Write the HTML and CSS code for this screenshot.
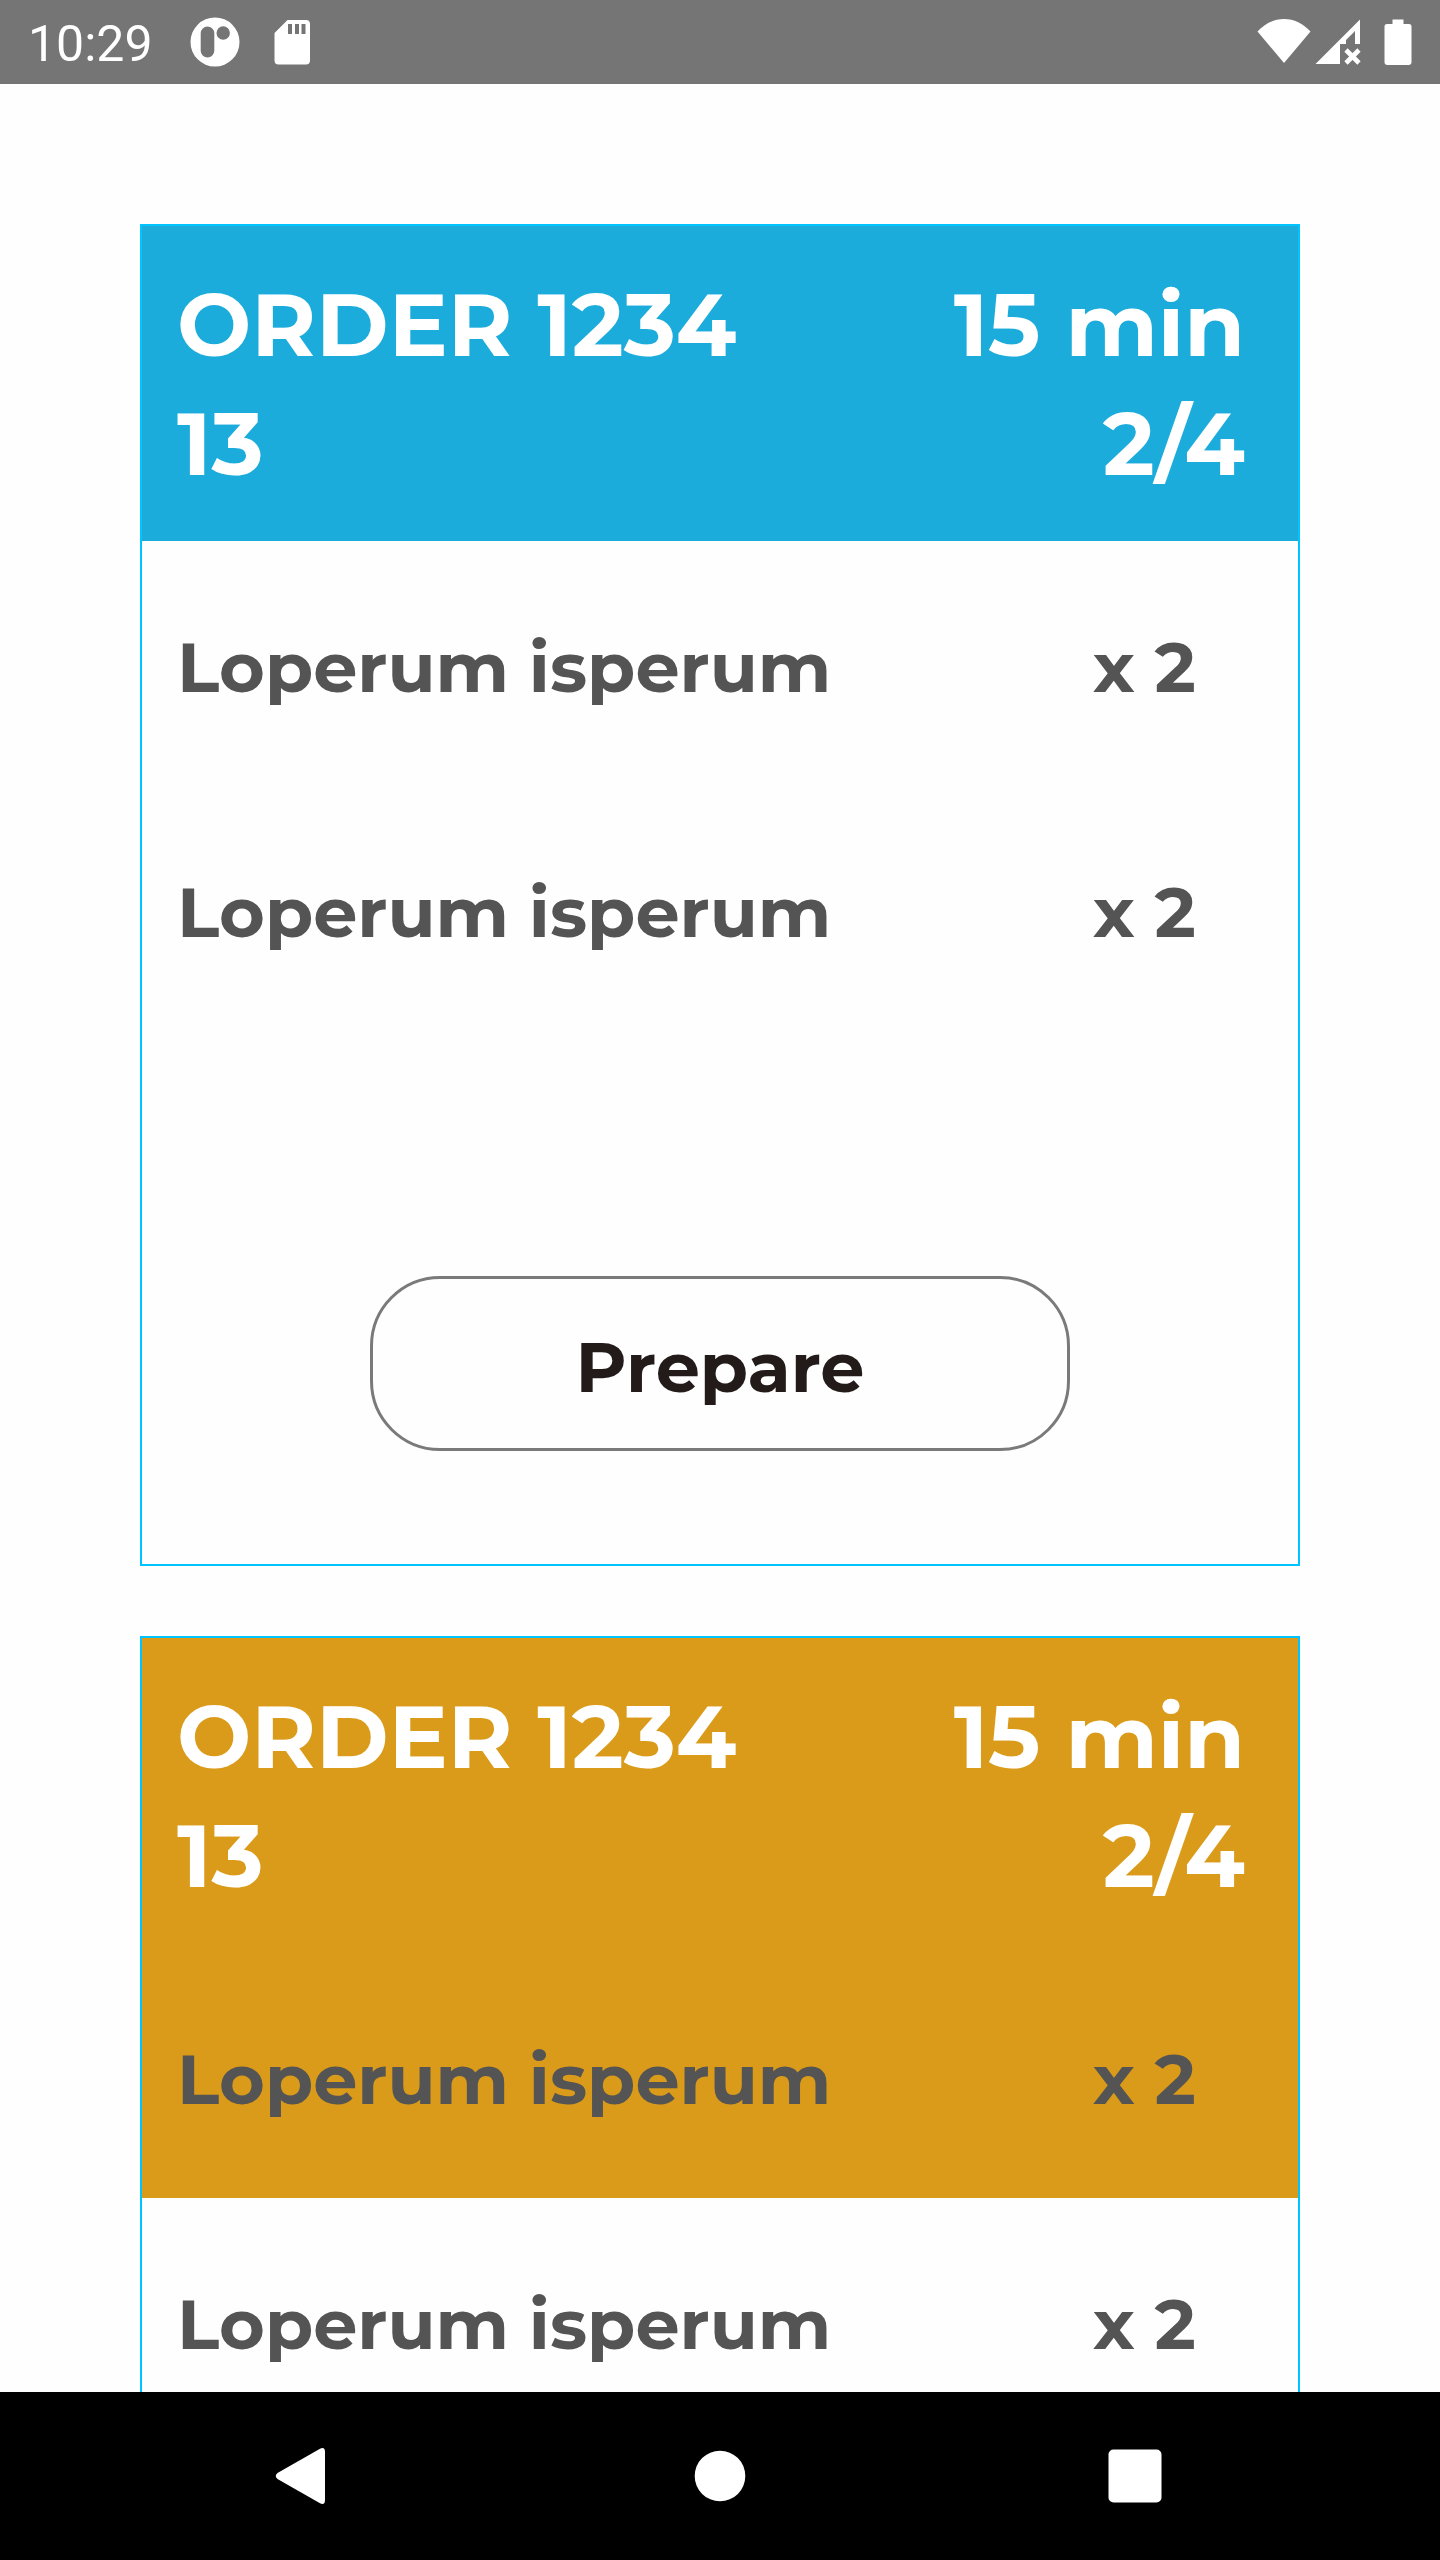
FILE: index.html
```html
<!DOCTYPE html>
<html lang="en">
<head>
  <meta charset="utf-8">
  <meta name="viewport" content="width=device-width, initial-scale=1">
  <title>Orders</title>
  <link rel="stylesheet" href="styles.css">
</head>
<body>
  <div class="screen">
    <header class="status-bar">
      <time class="clock">10:29</time>
      <svg class="status-icon app-icon" viewBox="0 0 50 50" aria-hidden="true">
        <path fill="#fff" fill-rule="evenodd" d="M25 .5a24.500 24.500 0 1 0 0 49a24.500 24.500 0 1 0 0-49zM17.500 9.500a6.800 6.800 0 0 1 6.800 6.800v17.400a6.800 6.800 0 0 1-13.600 0V16.300a6.800 6.800 0 0 1 6.800-6.800zM33.200 9.300a6.700 6.700 0 1 1 0 13.400a6.700 6.700 0 1 1 0-13.400z"/>
      </svg>
      <svg class="status-icon card-icon" viewBox="0 0 36 50" aria-hidden="true">
        <path fill="#fff" fill-rule="evenodd" d="M13.500 3H32a4 4 0 0 1 4 4v36.500a4 4 0 0 1-4 4H4.500a4 4 0 0 1-4-4V16zM14 7v10h4V7zM21 7v10h4V7zM27.500 7v10h4V7z"/>
      </svg>
      <span class="spacer"></span>
      <svg class="status-icon wifi-icon" viewBox="0 0 54 50" aria-hidden="true">
        <path fill="#fff" d="M27 46L.5 14.500C8 6.500 17 2 27 2s19 4.500 26.500 12.500z"/>
      </svg>
      <svg class="status-icon signal-icon" viewBox="0 0 46 50" aria-hidden="true">
        <path fill="#fff" d="M45 2.500V27h-5V14l-9 9v4h-6v20H.5z"/>
        <path fill="none" stroke="#fff" stroke-width="4.600" d="M31 33l13 13M44 33L31 46"/>
      </svg>
      <svg class="status-icon battery-icon" viewBox="0 0 28 50" aria-hidden="true">
        <path fill="#fff" d="M8.500 2.500h11V7H25a2.500 2.500 0 0 1 2.500 2.500v35.500a3 3 0 0 1-3 3h-21a3 3 0 0 1-3-3V9.500A2.500 2.500 0 0 1 3 7h5.500z"/>
      </svg>
    </header>

    <main class="orders">
      <article class="order order-new">
        <header class="order-header">
          <h2 class="order-title">ORDER 1234<br>13</h2>
          <p class="order-meta">15 min<br>2/4</p>
        </header>
        <ul class="items">
          <li class="item"><span>Loperum isperum</span><span>x 2</span></li>
          <li class="item"><span>Loperum isperum</span><span>x 2</span></li>
        </ul>
        <footer class="order-footer">
          <button class="prepare" type="button">Prepare</button>
        </footer>
      </article>

      <article class="order order-started">
        <header class="order-header">
          <h2 class="order-title">ORDER 1234<br>13</h2>
          <p class="order-meta">15 min<br>2/4</p>
        </header>
        <ul class="items">
          <li class="item item-active"><span>Loperum isperum</span><span>x 2</span></li>
          <li class="item"><span>Loperum isperum</span><span>x 2</span></li>
        </ul>
      </article>
    </main>

    <nav class="nav-bar" aria-label="System">
      <button class="nav-button" type="button" aria-label="Back">
        <svg class="nav-icon" viewBox="0 0 60 60" aria-hidden="true"><path fill="#fff" d="M2.500 27L45 2.700Q50 .500 50 6V54Q50 59.500 45 57.300L2.500 33Q-1 30 2.500 27z"/></svg>
      </button>
      <button class="nav-button" type="button" aria-label="Home">
        <svg class="nav-icon" viewBox="0 0 60 60" aria-hidden="true"><circle fill="#fff" cx="30" cy="30" r="25.300"/></svg>
      </button>
      <button class="nav-button" type="button" aria-label="Recent apps">
        <svg class="nav-icon" viewBox="0 0 60 60" aria-hidden="true"><rect fill="#fff" x="3.500" y="3.500" width="53" height="53" rx="5"/></svg>
      </button>
    </nav>
  </div>
</body>
</html>
```

FILE: styles.css
```css
* {
  box-sizing: border-box;
}

body {
  margin: 0;
  background: #fefefe;
  font-family: "Montserrat", "Inter", sans-serif;
}

.screen {
  display: flex;
  flex-direction: column;
  height: 100vh;
}

/* Status bar */
.status-bar {
  display: flex;
  align-items: center;
  flex: none;
  height: 84px;
  padding: 0 28px;
  background: #757575;
  color: #fff;
}

.clock {
  width: 162px;
  padding-top: 4px;
  font: 400 50px/80px Roboto, sans-serif;
}

.status-icon {
  height: 50px;
  flex: none;
}

.app-icon {
  width: 50px;
}

.card-icon {
  width: 36px;
  margin-left: 34px;
}

.spacer {
  flex: 1;
}

.wifi-icon {
  width: 54px;
}

.signal-icon {
  width: 46px;
  margin-left: 4px;
}

.battery-icon {
  width: 28px;
  margin-left: 23px;
}

/* Order list */
.orders {
  flex: 1;
  min-height: 0;
  overflow-y: auto;
  scrollbar-width: none;
  padding: 140px;
}

.order {
  border: 2px solid #00c4ff;
  font-weight: 700;
}

.order + .order {
  margin-top: 70px;
}

.order-header {
  display: flex;
  justify-content: space-between;
  padding: 39px 53px 38px 35px;
  color: #fff;
}

.order-new .order-header {
  background: #1cacdc;
}

.order-started .order-header,
.item-active {
  background: #da9b1a;
}

.order-title,
.order-meta {
  margin: 0;
  font-size: 88px;
  font-weight: 700;
  line-height: 119px;
}

.order-meta {
  text-align: right;
}

.items {
  margin: 0;
  padding: 0;
  list-style: none;
}

.item {
  display: grid;
  grid-template-columns: 1fr 205px;
  align-items: center;
  height: 245px;
  padding: 6px 0 0 35px;
  color: #545454;
  font-size: 70px;
  line-height: 90px;
}

.order-footer {
  display: flex;
  justify-content: center;
  padding: 245px 0 113px;
}

.prepare {
  width: 700px;
  height: 175px;
  padding: 6px 0 0;
  border: 3px solid #7a7a7a;
  border-radius: 70px;
  background: #fefefe;
  color: #231a1a;
  font: inherit;
  font-size: 70px;
}

/* System navigation */
.nav-bar {
  display: grid;
  grid-template-columns: repeat(3, 1fr);
  flex: none;
  height: 168px;
  padding: 0 98px;
  background: #000;
}

.nav-button {
  display: flex;
  align-items: center;
  justify-content: center;
  padding: 0;
  border: 0;
  background: none;
}

.nav-icon {
  width: 60px;
  height: 60px;
}
```
